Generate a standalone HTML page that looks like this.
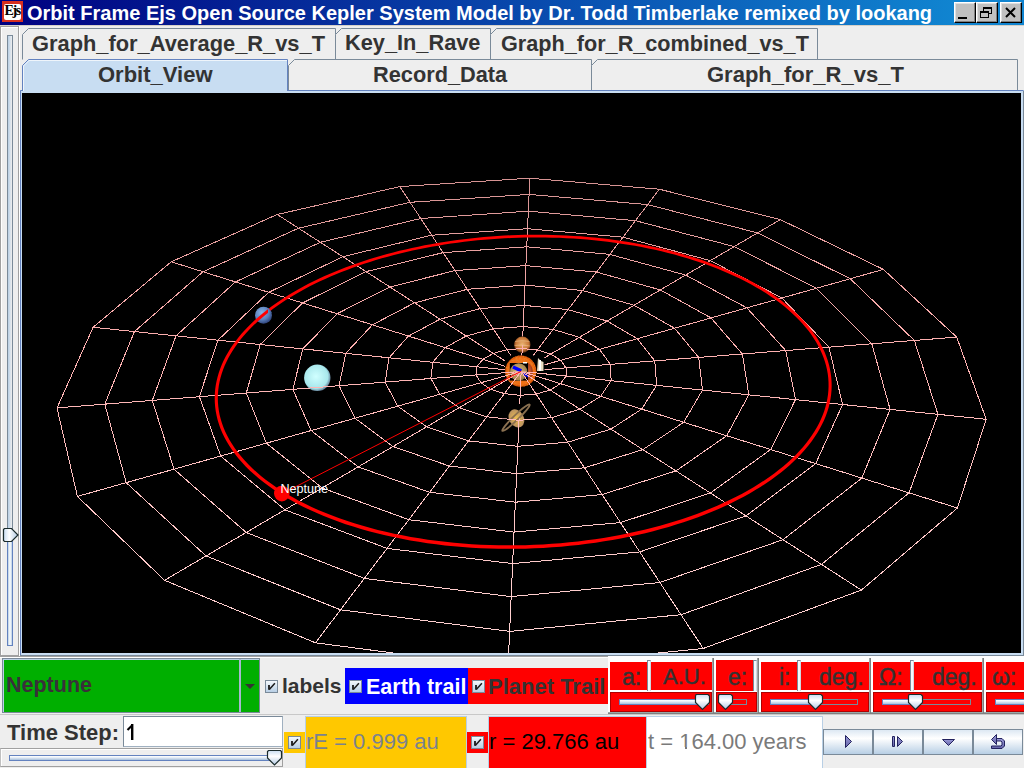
<!DOCTYPE html>
<html><head><meta charset="utf-8">
<style>
*{box-sizing:border-box;margin:0;padding:0}
html,body{width:1024px;height:768px;overflow:hidden;background:#eeeeee;font-family:"Liberation Sans",sans-serif;color:#333}
.a{position:absolute}
.t{position:absolute;white-space:pre;line-height:1}
.b{font-weight:bold}
/* title */
#title{left:0;top:0;width:1024px;height:25px;background:linear-gradient(to right,#000080 0%,#1084d0 93%)}
.wb{position:absolute;top:2px;width:22px;height:21px;background:#c0c0c0;border-top:1px solid #fff;border-left:1px solid #fff;border-right:1px solid #000;border-bottom:1px solid #000;box-shadow:inset -1px -1px 0 #808080, inset 1px 1px 0 #dfdfdf}
/* tabs */
.tab{position:absolute;background:#eeeeee;border-top:1px solid #7a8a99;border-right:1px solid #7a8a99;color:#333;font-weight:bold;font-size:21px;text-align:center}
.cb{position:absolute;width:13px;height:13px;border:1px solid #7a8a99;background:linear-gradient(to bottom,#f4f8fc,#b8cfe5)}
.cb::after{content:"";position:absolute;left:3px;top:2px;width:7px;height:7px;background:none}
.chk{position:absolute;left:1px;top:1px}
.btn{position:absolute;top:729px;height:26px;width:50px;border:1px solid #7a8a99;background:linear-gradient(to bottom,#dde8f3 0%,#ffffff 35%,#b8cfe5 100%)}
.rp{position:absolute;background:#ff0000}
.trk{position:absolute;height:6px;border:1px solid #6382bf;background:linear-gradient(to bottom,#ffffff 0%,#e8f0f8 35%,#a8c0dc 100%)}
.trk2{position:absolute;height:6px;border:1px solid #7a8a99}
</style></head><body>
<!-- title bar -->
<div id="title" class="a">
  <div class="a" style="left:2px;top:1px;width:21px;height:21px;background:#d83020"></div>
  <div class="a" style="left:4px;top:4px;width:17px;height:16px;background:#fff;border-radius:2px"></div>
  <div class="t" style="left:4.5px;top:3.5px;font-family:'Liberation Serif';font-weight:bold;font-size:14px;color:#000;letter-spacing:-1.4px">Ejs</div>
  <div class="t b" style="left:27px;top:3px;font-size:20px;color:#fff">Orbit Frame Ejs Open Source Kepler System Model by Dr. Todd Timberlake remixed by lookang</div>
  <div class="wb" style="left:954px"><div class="a" style="left:3px;top:14px;width:9px;height:2px;background:#000"></div></div>
  <div class="wb" style="left:976px">
    <div class="a" style="left:6px;top:4px;width:9px;height:7px;border:1px solid #000;border-top-width:2px"></div>
    <div class="a" style="left:3px;top:8px;width:9px;height:7px;border:1px solid #000;border-top-width:2px;background:#c0c0c0"></div>
  </div>
  <div class="wb" style="left:1000px">
    <svg class="a" style="left:3px;top:3px" width="14" height="14"><path d="M2,2 L11,11 M11,2 L2,11" stroke="#000" stroke-width="2"/></svg>
  </div>
</div>
<div class="a" style="left:0;top:25px;width:1024px;height:1px;background:#d4d0c8"></div>

<!-- left panel -->
<div class="a" style="left:0;top:26px;width:19px;height:630px;border:1px solid #a0a0a0;box-shadow:inset 1px 1px 0 #fff;background:#eeeeee"></div>
<div class="a" style="left:19px;top:26px;width:1px;height:630px;background:#fff"></div>
<div class="a" style="left:7px;top:35px;width:6px;height:494px;border:1px solid #7a8a99;border-bottom:none;background:linear-gradient(to right,#b8cfe5,#eeeeee)"></div>
<div class="a" style="left:7px;top:540px;width:6px;height:106px;border:1px solid #6382bf;background:linear-gradient(to right,#b8cfe5,#ffffff 50%,#b8cfe5)"></div>
<svg class="a" style="left:2px;top:527px" width="18" height="17"><defs><linearGradient id="tgv" x1="0" y1="0" x2="1" y2="0"><stop offset="0" stop-color="#c8dcf0"/><stop offset="0.4" stop-color="#ffffff"/><stop offset="1" stop-color="#b0c8e2"/></linearGradient></defs><path d="M1.5,2.5 L2.5,1.5 L9.5,1.5 L16,8 L9.5,14.5 L2.5,14.5 L1.5,13.5 Z" fill="url(#tgv)" stroke="#1a2a2a" stroke-width="1.2"/></svg>

<!-- tabs -->
<svg class="a" style="left:0;top:0" width="1024" height="100">
  <path d="M22.5,59.5 L22.5,34.5 L28.5,28.5 L335.5,28.5 L335.5,59.5" fill="#eeeeee" stroke="#7a8a99" stroke-width="1"/>
  <path d="M335.5,59.5 L335.5,34.5 L341.5,28.5 L490.5,28.5 L490.5,59.5" fill="#eeeeee" stroke="#7a8a99" stroke-width="1"/>
  <path d="M490.5,59.5 L490.5,34.5 L496.5,28.5 L817.5,28.5 L817.5,59.5" fill="#eeeeee" stroke="#7a8a99" stroke-width="1"/>
  <path d="M288.5,90.5 L288.5,65.5 L294.5,59.5 L591.5,59.5 L591.5,90.5" fill="#eeeeee" stroke="#7a8a99" stroke-width="1"/>
  <path d="M591.5,90.5 L591.5,65.5 L597.5,59.5 L1017.5,59.5 L1017.5,90.5" fill="#eeeeee" stroke="#7a8a99" stroke-width="1"/>
  <!-- content frame -->
  <rect x="20" y="90" width="1004" height="10" fill="#c8ddf2"/>
  <path d="M20.5,100 L20.5,90.5 L22.5,90.5 M287.5,90.5 L1023.5,90.5" fill="none" stroke="#6382bf" stroke-width="1"/>
  <path d="M22.5,91 L22.5,65.5 L28.5,59.5 L287.5,59.5 L287.5,91" fill="#c8ddf2" stroke="#6382bf" stroke-width="1"/>
  <path d="M23.5,91 L23.5,66 L29,60.5 L287,60.5" fill="none" stroke="#ffffff" stroke-width="1" opacity="0.7"/>
</svg>
<div class="a" style="left:20px;top:100px;width:1004px;height:556px;background:#c8ddf2"></div>
<div class="a" style="left:20px;top:100px;width:1px;height:556px;background:#6382bf"></div>
<div class="a" style="left:1023px;top:91px;width:1px;height:565px;background:#7a8a99"></div>
<div class="a" style="left:20px;top:655px;width:1004px;height:1px;background:#7a8a99"></div>
<div class="t b" style="left:32px;top:33px;font-size:21.85px">Graph_for_Average_R_vs_T</div>
<div class="t b" style="left:345px;top:32px;font-size:21.75px">Key_In_Rave</div>
<div class="t b" style="left:501px;top:33px;font-size:21.65px">Graph_for_R_combined_vs_T</div>
<div class="t b" style="left:98px;top:64px;font-size:22px">Orbit_View</div>
<div class="t b" style="left:373px;top:64px;font-size:21.75px">Record_Data</div>
<div class="t b" style="left:707px;top:64px;font-size:22px">Graph_for_R_vs_T</div>
<div class="a" style="left:22px;top:93px;width:999px;height:560px;background:#000;overflow:hidden">
<svg width="999" height="560" viewBox="22 93 999 560" style="display:block">
  <defs>
    
    <linearGradient id="gridG" gradientUnits="userSpaceOnUse" x1="0" y1="170" x2="0" y2="655"><stop offset="0.000" stop-color="#d39191"/><stop offset="0.125" stop-color="#e59d9d"/><stop offset="0.250" stop-color="#f4a7a7"/><stop offset="0.375" stop-color="#ffb1b1"/><stop offset="0.500" stop-color="#ffb9b9"/><stop offset="0.625" stop-color="#ffc1c1"/><stop offset="0.750" stop-color="#ffc8c8"/><stop offset="0.875" stop-color="#ffcece"/><stop offset="1.000" stop-color="#ffd4d4"/></linearGradient>
    <radialGradient id="gNep" cx="0.4" cy="0.35" r="0.7"><stop offset="0" stop-color="#8ab4e4"/><stop offset="0.6" stop-color="#5a80bc"/><stop offset="1" stop-color="#2a3a70"/></radialGradient>
    <radialGradient id="gUra" cx="0.45" cy="0.45" r="0.6"><stop offset="0" stop-color="#d0ffff"/><stop offset="0.75" stop-color="#a8e8ec"/><stop offset="1" stop-color="#506080"/></radialGradient>
    <radialGradient id="gJup" cx="0.5" cy="0.45" r="0.55"><stop offset="0" stop-color="#e8b070"/><stop offset="0.7" stop-color="#c87838"/><stop offset="1" stop-color="#5a2810"/></radialGradient>
    <radialGradient id="gSun" cx="0.5" cy="0.5" r="0.5"><stop offset="0" stop-color="#f87818"/><stop offset="0.85" stop-color="#f06a12"/><stop offset="1" stop-color="#d04a00"/></radialGradient>
    <radialGradient id="gVen" cx="0.45" cy="0.45" r="0.6"><stop offset="0" stop-color="#d8b878"/><stop offset="0.8" stop-color="#a88850"/><stop offset="1" stop-color="#6a5030"/></radialGradient>
    <radialGradient id="gMar" cx="0.3" cy="0.5" r="0.7"><stop offset="0" stop-color="#d06030"/><stop offset="1" stop-color="#903018"/></radialGradient>
    <radialGradient id="gSat" cx="0.5" cy="0.5" r="0.5"><stop offset="0" stop-color="#f0c050"/><stop offset="1" stop-color="#b89060"/></radialGradient>
    <clipPath id="front">
      <rect x="505" y="371.4" width="31.5" height="16"/>
      <rect x="514" y="345" width="16.5" height="8.5"/>
      <rect x="304" y="378" width="26.5" height="13.5"/>
      <rect x="255" y="315.5" width="17" height="8.5"/>
      <rect x="502" y="418.5" width="29" height="14.5"/>
      <rect x="530" y="371.4" width="14.5" height="1"/>
    </clipPath>
  </defs>
  <path d="M566.0,376.0 L566.0,367.9 L560.7,360.3 L550.8,354.1 L537.4,350.0 L522.2,348.5 L506.9,349.7 L493.3,353.4 L482.8,359.4 L476.8,366.8 L476.1,374.9 L480.9,382.8 L490.7,389.3 L504.4,393.6 L520.2,395.3 L536.1,394.0 L550.1,390.0 L560.5,383.7Z M611.1,380.7 L610.5,364.4 L599.4,349.4 L579.4,337.3 L553.0,329.4 L523.2,326.5 L493.2,328.8 L466.2,336.0 L445.2,347.6 L432.8,362.3 L430.8,378.5 L439.8,394.3 L459.2,407.7 L486.8,416.8 L519.0,420.3 L551.6,417.6 L580.0,409.2 L600.6,396.3Z M656.6,385.3 L654.8,360.9 L637.3,338.7 L607.2,321.1 L568.0,309.6 L524.2,305.4 L480.0,308.6 L440.0,319.2 L408.4,336.1 L389.1,357.8 L385.1,382.1 L397.8,406.2 L426.7,426.8 L468.5,440.9 L517.9,446.3 L567.7,442.2 L610.9,429.1 L641.7,409.1Z M702.5,390.1 L698.7,357.4 L674.5,328.2 L634.1,305.3 L582.5,290.5 L525.1,285.1 L467.3,289.3 L414.6,302.8 L372.4,324.8 L345.8,353.3 L339.1,385.7 L354.9,418.2 L393.0,446.5 L449.5,466.1 L516.7,473.6 L584.5,467.8 L642.9,449.6 L683.7,422.3Z M748.8,394.8 L742.4,354.0 L711.0,317.9 L660.3,289.9 L596.5,272.1 L525.9,265.6 L455.0,270.6 L389.9,287.0 L337.1,313.7 L302.8,348.9 L292.9,389.4 L311.2,430.6 L358.2,466.9 L429.6,492.3 L515.4,502.2 L602.1,494.6 L676.0,470.9 L726.7,435.7Z M795.5,399.6 L785.8,350.6 L746.8,307.8 L685.7,275.1 L609.9,254.4 L526.8,246.8 L443.2,252.6 L366.1,271.6 L302.6,302.9 L260.2,344.5 L246.3,393.0 L266.4,443.2 L322.2,488.0 L408.8,519.7 L514.0,532.1 L620.5,522.6 L710.4,493.0 L770.7,449.5Z M842.6,404.5 L828.9,347.2 L781.9,298.0 L710.3,260.6 L622.9,237.2 L527.6,228.7 L431.8,235.2 L342.9,256.7 L268.7,292.3 L217.9,340.2 L199.4,396.7 L220.7,456.1 L284.9,509.8 L387.1,548.4 L512.6,563.6 L639.8,551.9 L746.0,516.0 L815.7,463.6Z M890.1,409.4 L871.8,343.8 L816.4,288.3 L734.3,246.6 L635.5,220.7 L528.4,211.2 L420.8,218.5 L320.3,242.3 L235.5,281.9 L176.0,335.9 L152.3,400.4 L174.0,469.2 L246.2,532.5 L364.3,578.4 L511.2,596.6 L659.9,582.5 L783.0,539.7 L861.8,478.1Z M937.9,414.3 L914.4,340.5 L850.2,278.7 L757.6,232.9 L647.6,204.6 L529.1,194.4 L410.1,202.3 L298.5,228.2 L203.0,271.8 L134.4,331.6 L104.8,404.2 L126.2,482.7 L206.1,556.0 L340.5,609.8 L509.6,631.4 L681.0,614.7 L821.5,564.4 L909.0,492.9Z M986.2,419.3 L956.7,337.1 L883.4,269.4 L780.3,219.6 L659.3,189.2 L529.8,178.2 L399.8,186.6 L277.2,214.5 L171.2,261.8 L93.1,327.3 L57.0,407.9 L77.4,496.4 L164.5,580.3 L315.5,642.8 L508.0,668.0 L703.2,648.5 L861.4,590.1 L957.4,508.0Z M521.2,371.4 L986.2,419.3 M521.2,371.4 L956.7,337.1 M521.2,371.4 L883.4,269.4 M521.2,371.4 L780.3,219.6 M521.2,371.4 L659.3,189.2 M521.2,371.4 L529.8,178.2 M521.2,371.4 L399.8,186.6 M521.2,371.4 L277.2,214.5 M521.2,371.4 L171.2,261.8 M521.2,371.4 L93.1,327.3 M521.2,371.4 L57.0,407.9 M521.2,371.4 L77.4,496.4 M521.2,371.4 L164.5,580.3 M521.2,371.4 L315.5,642.8 M521.2,371.4 L508.0,668.0 M521.2,371.4 L703.2,648.5 M521.2,371.4 L861.4,590.1 M521.2,371.4 L957.4,508.0" fill="none" stroke="url(#gridG)" stroke-width="1" shape-rendering="crispEdges"/>
  <g fill="#000">
    <rect x="505" y="355.5" width="31.5" height="16"/>
    <rect x="514" y="336.5" width="16.5" height="8.5"/>
    <rect x="304" y="364.5" width="26.5" height="13.5"/>
    <rect x="255" y="306.5" width="17" height="9"/>
    <rect x="502" y="404" width="29" height="14.5"/>
    <rect x="530" y="357.5" width="14.5" height="14"/>
  </g>
  <circle cx="263.5" cy="315.2" r="8.5" fill="url(#gNep)"/>
  <circle cx="317.3" cy="377.8" r="13.2" fill="url(#gUra)"/>
  <!-- jupiter -->
  <circle cx="522.3" cy="344.8" r="8.2" fill="url(#gJup)"/>
  <path d="M515,341.5 Q522,340 529.5,341.5 M514.5,345.5 Q522,344.5 530,346" stroke="#f8d8a0" stroke-width="1.2" fill="none" opacity="0.45"/>
  <!-- sun -->
  <circle cx="520.8" cy="371.2" r="15.6" fill="url(#gSun)"/>
  <filter id="mot" x="0" y="0" width="1" height="1"><feTurbulence type="fractalNoise" baseFrequency="0.55" numOctaves="2" seed="7" result="n"/><feColorMatrix in="n" type="matrix" values="0 0 0 0 0.78  0 0 0 0 0.22  0 0 0 0 0.02  2.6 0 0 0 -1.05" result="c"/><feComposite in="c" in2="SourceGraphic" operator="in"/></filter>
  <circle cx="520.8" cy="371.2" r="15.6" fill="#000" filter="url(#mot)"/>
  <rect x="509.8" y="363" width="18.2" height="17.6" fill="#000"/>
  <circle cx="518.7" cy="372" r="8.7" fill="url(#gVen)"/>
  <path d="M528,363 A8.5,10 0 0 1 528,381 Z" fill="url(#gMar)"/>
  <rect x="523" y="362" width="4" height="1.5" fill="#fff"/>
  <line x1="513" y1="367" x2="521.3" y2="370.8" stroke="#0000ff" stroke-width="3.5"/>
  <line x1="523.5" y1="373.5" x2="528.4" y2="376.3" stroke="#0000ff" stroke-width="2.5"/>
  <!-- spacecraft -->
  <path d="M538,358 L541,361 L543.5,362 L543.5,371 L537,371 Z" fill="#e8dcc0"/>
  <rect x="539" y="360" width="2" height="11" fill="#ffffff"/>
  <!-- saturn -->
  <ellipse cx="516.4" cy="418.4" rx="7.3" ry="9.5" transform="rotate(-30 516.4 418.4)" fill="url(#gSat)"/>
  <ellipse cx="516" cy="417.7" rx="19" ry="2.4" transform="rotate(-44 516 417.7)" fill="none" stroke="#8a7050" stroke-width="1.8"/>
  <!-- grid in front of planet billboards -->
  <path d="M566.0,376.0 L566.0,367.9 L560.7,360.3 L550.8,354.1 L537.4,350.0 L522.2,348.5 L506.9,349.7 L493.3,353.4 L482.8,359.4 L476.8,366.8 L476.1,374.9 L480.9,382.8 L490.7,389.3 L504.4,393.6 L520.2,395.3 L536.1,394.0 L550.1,390.0 L560.5,383.7Z M611.1,380.7 L610.5,364.4 L599.4,349.4 L579.4,337.3 L553.0,329.4 L523.2,326.5 L493.2,328.8 L466.2,336.0 L445.2,347.6 L432.8,362.3 L430.8,378.5 L439.8,394.3 L459.2,407.7 L486.8,416.8 L519.0,420.3 L551.6,417.6 L580.0,409.2 L600.6,396.3Z M656.6,385.3 L654.8,360.9 L637.3,338.7 L607.2,321.1 L568.0,309.6 L524.2,305.4 L480.0,308.6 L440.0,319.2 L408.4,336.1 L389.1,357.8 L385.1,382.1 L397.8,406.2 L426.7,426.8 L468.5,440.9 L517.9,446.3 L567.7,442.2 L610.9,429.1 L641.7,409.1Z M702.5,390.1 L698.7,357.4 L674.5,328.2 L634.1,305.3 L582.5,290.5 L525.1,285.1 L467.3,289.3 L414.6,302.8 L372.4,324.8 L345.8,353.3 L339.1,385.7 L354.9,418.2 L393.0,446.5 L449.5,466.1 L516.7,473.6 L584.5,467.8 L642.9,449.6 L683.7,422.3Z M748.8,394.8 L742.4,354.0 L711.0,317.9 L660.3,289.9 L596.5,272.1 L525.9,265.6 L455.0,270.6 L389.9,287.0 L337.1,313.7 L302.8,348.9 L292.9,389.4 L311.2,430.6 L358.2,466.9 L429.6,492.3 L515.4,502.2 L602.1,494.6 L676.0,470.9 L726.7,435.7Z M795.5,399.6 L785.8,350.6 L746.8,307.8 L685.7,275.1 L609.9,254.4 L526.8,246.8 L443.2,252.6 L366.1,271.6 L302.6,302.9 L260.2,344.5 L246.3,393.0 L266.4,443.2 L322.2,488.0 L408.8,519.7 L514.0,532.1 L620.5,522.6 L710.4,493.0 L770.7,449.5Z M842.6,404.5 L828.9,347.2 L781.9,298.0 L710.3,260.6 L622.9,237.2 L527.6,228.7 L431.8,235.2 L342.9,256.7 L268.7,292.3 L217.9,340.2 L199.4,396.7 L220.7,456.1 L284.9,509.8 L387.1,548.4 L512.6,563.6 L639.8,551.9 L746.0,516.0 L815.7,463.6Z M890.1,409.4 L871.8,343.8 L816.4,288.3 L734.3,246.6 L635.5,220.7 L528.4,211.2 L420.8,218.5 L320.3,242.3 L235.5,281.9 L176.0,335.9 L152.3,400.4 L174.0,469.2 L246.2,532.5 L364.3,578.4 L511.2,596.6 L659.9,582.5 L783.0,539.7 L861.8,478.1Z M937.9,414.3 L914.4,340.5 L850.2,278.7 L757.6,232.9 L647.6,204.6 L529.1,194.4 L410.1,202.3 L298.5,228.2 L203.0,271.8 L134.4,331.6 L104.8,404.2 L126.2,482.7 L206.1,556.0 L340.5,609.8 L509.6,631.4 L681.0,614.7 L821.5,564.4 L909.0,492.9Z M986.2,419.3 L956.7,337.1 L883.4,269.4 L780.3,219.6 L659.3,189.2 L529.8,178.2 L399.8,186.6 L277.2,214.5 L171.2,261.8 L93.1,327.3 L57.0,407.9 L77.4,496.4 L164.5,580.3 L315.5,642.8 L508.0,668.0 L703.2,648.5 L861.4,590.1 L957.4,508.0Z M521.2,371.4 L986.2,419.3 M521.2,371.4 L956.7,337.1 M521.2,371.4 L883.4,269.4 M521.2,371.4 L780.3,219.6 M521.2,371.4 L659.3,189.2 M521.2,371.4 L529.8,178.2 M521.2,371.4 L399.8,186.6 M521.2,371.4 L277.2,214.5 M521.2,371.4 L171.2,261.8 M521.2,371.4 L93.1,327.3 M521.2,371.4 L57.0,407.9 M521.2,371.4 L77.4,496.4 M521.2,371.4 L164.5,580.3 M521.2,371.4 L315.5,642.8 M521.2,371.4 L508.0,668.0 M521.2,371.4 L703.2,648.5 M521.2,371.4 L861.4,590.1 M521.2,371.4 L957.4,508.0" fill="none" stroke="url(#gridG)" stroke-width="1" shape-rendering="crispEdges" clip-path="url(#front)"/>
  <path d="M829.65,403.31 L830.49,399.07 L831.11,394.78 L831.50,390.49 L831.66,386.20 L831.59,381.93 L831.29,377.67 L830.76,373.42 L830.01,369.20 L829.04,364.99 L827.84,360.82 L826.42,356.68 L824.79,352.57 L822.94,348.50 L820.88,344.47 L818.62,340.49 L816.15,336.55 L813.48,332.66 L810.61,328.82 L807.56,325.04 L804.31,321.32 L800.87,317.65 L797.26,314.05 L793.47,310.51 L789.51,307.03 L785.38,303.63 L781.09,300.29 L776.64,297.02 L772.04,293.83 L767.29,290.72 L762.40,287.68 L757.37,284.71 L752.20,281.83 L746.91,279.03 L741.49,276.31 L735.96,273.67 L730.31,271.11 L724.55,268.64 L718.69,266.25 L712.74,263.96 L706.69,261.74 L700.55,259.62 L694.33,257.58 L688.03,255.63 L681.66,253.76 L675.22,251.99 L668.72,250.30 L662.15,248.70 L655.54,247.19 L648.87,245.77 L642.16,244.44 L635.41,243.19 L628.62,242.04 L621.80,240.97 L614.95,239.98 L608.07,239.09 L601.18,238.27 L594.26,237.55 L587.34,236.91 L580.40,236.35 L573.46,235.88 L566.51,235.49 L559.57,235.18 L552.62,234.96 L545.68,234.82 L538.76,234.75 L531.84,234.77 L524.94,234.86 L518.05,235.04 L511.18,235.29 L504.34,235.62 L497.51,236.02 L490.72,236.51 L483.95,237.06 L477.21,237.69 L470.51,238.40 L463.84,239.17 L457.20,240.02 L450.60,240.95 L444.05,241.94 L437.53,243.01 L431.06,244.14 L424.63,245.35 L418.25,246.63 L411.92,247.97 L405.64,249.39 L399.41,250.87 L393.24,252.43 L387.12,254.05 L381.05,255.74 L375.05,257.49 L369.11,259.32 L363.23,261.21 L357.42,263.18 L351.68,265.21 L346.00,267.30 L340.40,269.47 L334.88,271.70 L329.43,274.00 L324.06,276.36 L318.77,278.79 L313.57,281.29 L308.45,283.86 L303.43,286.50 L298.50,289.20 L293.67,291.96 L288.94,294.80 L284.32,297.70 L279.80,300.66 L275.40,303.69 L271.11,306.79 L266.94,309.95 L262.89,313.18 L258.98,316.47 L255.19,319.82 L251.55,323.23 L248.04,326.71 L244.68,330.25 L241.48,333.85 L238.42,337.50 L235.53,341.21 L232.81,344.98 L230.25,348.81 L227.87,352.69 L225.67,356.61 L223.66,360.59 L221.83,364.62 L220.20,368.69 L218.78,372.80 L217.56,376.95 L216.55,381.14 L215.75,385.37 L215.17,389.62 L214.82,393.90 L214.70,398.21 L214.81,402.53 L215.16,406.87 L215.74,411.22 L216.57,415.57 L217.64,419.93 L218.95,424.28 L220.52,428.63 L222.33,432.96 L224.40,437.28 L226.72,441.57 L229.29,445.84 L232.11,450.08 L235.19,454.28 L238.51,458.45 L242.09,462.57 L245.91,466.64 L249.98,470.65 L254.30,474.61 L258.85,478.51 L263.65,482.33 L268.68,486.09 L273.94,489.77 L279.43,493.37 L285.14,496.89 L291.07,500.32 L297.21,503.66 L303.56,506.90 L310.11,510.04 L316.86,513.07 L323.79,516.01 L330.90,518.83 L338.18,521.53 L345.63,524.13 L353.24,526.60 L361.00,528.95 L368.90,531.18 L376.93,533.28 L385.09,535.25 L393.36,537.10 L401.74,538.81 L410.21,540.39 L418.78,541.84 L427.43,543.16 L436.15,544.33 L444.93,545.38 L453.76,546.28 L462.64,547.05 L471.56,547.69 L480.50,548.19 L489.46,548.55 L498.44,548.78 L507.41,548.87 L516.38,548.84 L525.34,548.66 L534.27,548.36 L543.17,547.93 L552.04,547.37 L560.87,546.68 L569.64,545.86 L578.36,544.92 L587.01,543.86 L595.59,542.68 L604.09,541.37 L612.51,539.95 L620.84,538.42 L629.07,536.77 L637.21,535.01 L645.24,533.14 L653.15,531.16 L660.95,529.08 L668.63,526.89 L676.18,524.61 L683.60,522.22 L690.89,519.74 L698.03,517.16 L705.03,514.49 L711.88,511.73 L718.58,508.88 L725.11,505.95 L731.49,502.93 L737.70,499.83 L743.74,496.66 L749.61,493.40 L755.31,490.08 L760.82,486.68 L766.15,483.21 L771.29,479.67 L776.24,476.07 L781.00,472.41 L785.56,468.69 L789.92,464.91 L794.07,461.07 L798.03,457.19 L801.77,453.26 L805.30,449.28 L808.62,445.26 L811.73,441.20 L814.61,437.10 L817.28,432.97 L819.72,428.80 L821.94,424.61 L823.94,420.39 L825.70,416.16 L827.24,411.90 L828.56,407.63 L829.63,403.39Z M826.59,402.62 L825.52,406.78 L824.25,410.90 L822.75,415.00 L821.03,419.10 L819.09,423.18 L816.92,427.24 L814.54,431.28 L811.94,435.29 L809.12,439.28 L806.08,443.23 L802.83,447.16 L799.36,451.04 L795.69,454.89 L791.81,458.69 L787.72,462.44 L783.43,466.15 L778.93,469.80 L774.24,473.40 L769.36,476.94 L764.28,480.42 L759.02,483.83 L753.57,487.18 L747.94,490.46 L742.14,493.67 L736.16,496.81 L730.00,499.87 L723.69,502.85 L717.21,505.75 L710.57,508.56 L703.78,511.29 L696.83,513.93 L689.75,516.48 L682.52,518.94 L675.15,521.30 L667.65,523.56 L660.03,525.73 L652.28,527.79 L644.42,529.75 L636.44,531.60 L628.36,533.34 L620.18,534.98 L611.90,536.50 L603.53,537.91 L595.08,539.20 L586.55,540.37 L577.95,541.42 L569.29,542.35 L560.57,543.16 L551.79,543.85 L542.98,544.40 L534.12,544.83 L525.24,545.13 L516.34,545.30 L507.42,545.34 L498.50,545.25 L489.58,545.02 L480.67,544.66 L471.78,544.17 L462.92,543.54 L454.10,542.77 L445.32,541.87 L436.59,540.84 L427.93,539.67 L419.34,538.37 L410.83,536.94 L402.41,535.37 L394.09,533.68 L385.88,531.85 L377.78,529.89 L369.81,527.81 L361.97,525.61 L354.28,523.29 L346.74,520.84 L339.35,518.28 L332.13,515.60 L325.09,512.82 L318.23,509.93 L311.56,506.93 L305.08,503.83 L298.80,500.64 L292.73,497.35 L286.88,493.98 L281.24,490.52 L275.83,486.98 L270.65,483.37 L265.69,479.68 L260.98,475.93 L256.50,472.12 L252.27,468.24 L248.28,464.32 L244.53,460.35 L241.04,456.34 L237.79,452.29 L234.79,448.21 L232.04,444.10 L229.53,439.96 L227.28,435.81 L225.27,431.64 L223.50,427.46 L221.98,423.27 L220.70,419.08 L219.66,414.89 L218.86,410.71 L218.28,406.53 L217.94,402.36 L217.82,398.21 L217.93,394.07 L218.26,389.95 L218.80,385.86 L219.56,381.79 L220.52,377.74 L221.69,373.73 L223.06,369.75 L224.62,365.80 L226.38,361.90 L228.33,358.03 L230.46,354.20 L232.77,350.42 L235.25,346.68 L237.91,342.99 L240.73,339.36 L243.71,335.77 L246.85,332.24 L250.14,328.76 L253.58,325.34 L257.16,321.97 L260.88,318.66 L264.73,315.41 L268.71,312.23 L272.82,309.10 L277.05,306.04 L281.40,303.03 L285.86,300.09 L290.43,297.22 L295.10,294.41 L299.88,291.66 L304.76,288.98 L309.74,286.36 L314.80,283.81 L319.96,281.33 L325.20,278.91 L330.53,276.55 L335.94,274.27 L341.42,272.04 L346.98,269.89 L352.62,267.80 L358.32,265.78 L364.10,263.83 L369.94,261.94 L375.84,260.12 L381.81,258.37 L387.83,256.68 L393.92,255.07 L400.06,253.52 L406.25,252.04 L412.50,250.62 L418.80,249.28 L425.15,248.01 L431.54,246.80 L437.98,245.67 L444.47,244.61 L450.99,243.61 L457.56,242.69 L464.16,241.84 L470.80,241.07 L477.48,240.37 L484.18,239.74 L490.92,239.18 L497.69,238.70 L504.48,238.30 L511.29,237.97 L518.13,237.72 L524.99,237.54 L531.86,237.45 L538.75,237.43 L545.64,237.49 L552.55,237.64 L559.46,237.86 L566.38,238.17 L573.29,238.56 L580.20,239.03 L587.11,239.58 L594.00,240.22 L600.88,240.95 L607.74,241.76 L614.58,242.65 L621.40,243.63 L628.18,244.70 L634.94,245.85 L641.65,247.10 L648.33,248.43 L654.95,249.84 L661.53,251.35 L668.05,252.94 L674.51,254.62 L680.91,256.39 L687.24,258.24 L693.50,260.19 L699.67,262.22 L705.76,264.33 L711.76,266.54 L717.67,268.82 L723.48,271.20 L729.19,273.65 L734.78,276.19 L740.26,278.81 L745.62,281.51 L750.86,284.30 L755.96,287.15 L760.94,290.09 L765.77,293.10 L770.45,296.19 L774.99,299.34 L779.37,302.57 L783.59,305.86 L787.65,309.22 L791.53,312.64 L795.25,316.13 L798.79,319.67 L802.14,323.27 L805.31,326.92 L808.30,330.62 L811.08,334.37 L813.68,338.17 L816.07,342.01 L818.26,345.88 L820.25,349.80 L822.03,353.74 L823.60,357.72 L824.95,361.72 L826.10,365.75 L827.03,369.80 L827.74,373.87 L828.24,377.96 L828.51,382.06 L828.57,386.17 L828.40,390.29 L828.02,394.41 L827.41,398.53 L826.57,402.70Z" fill="#ff0000" fill-rule="evenodd"/>
  <clipPath id="nepc"><rect x="268" y="300" width="10" height="13"/></clipPath>
  <circle cx="263.5" cy="315.2" r="8.5" fill="url(#gNep)" clip-path="url(#nepc)"/>
  <line x1="281.8" y1="493.8" x2="521" y2="371.4" stroke="#ff0000" stroke-width="1"/>
  <circle cx="281.8" cy="493.6" r="7.8" fill="#ff0000"/>
  <text x="280.5" y="493" font-family="Liberation Sans" font-size="12.6" fill="#fff">Neptune</text>
</svg>
</div>

<!-- bottom panel: row 1 -->
<div class="a" style="left:0;top:656px;width:1024px;height:1px;background:#a0a0a0"></div>
<div class="a" style="left:0;top:657px;width:1024px;height:1px;background:#fff"></div>
<!-- combo -->
<div class="a" style="left:2px;top:658px;width:258px;height:55px;border:1px solid #7a8a99;background:#00af00;box-shadow:inset 1px 1px 0 #b8cfe5"></div>
<div class="a" style="left:239px;top:659px;width:2px;height:53px;background:#a8b8d0"></div>
<div class="t b" style="left:6px;top:675px;font-size:21.5px;color:#3a303a">Neptune</div>
<svg class="a" style="left:245px;top:684px" width="11" height="6"><path d="M0,0 L10,0 L5,5 Z" fill="#333"/></svg>
<!-- labels -->
<div class="cb" style="left:265px;top:680px"><svg class="a" style="left:-1px;top:-1px" width="13" height="13"><path d="M4,5 L4,9.8" stroke="#1a1a1a" stroke-width="1.8" fill="none"/><path d="M4.3,9.4 L9.9,3.2" stroke="#1a1a1a" stroke-width="1.5" fill="none"/></svg></div>
<div class="t b" style="left:282px;top:675px;font-size:21px;color:#333">labels</div>
<!-- earth trail -->
<div class="a" style="left:345px;top:668px;width:123px;height:36px;background:#0000ff"></div>
<div class="cb" style="left:349px;top:680px"><svg class="a" style="left:-1px;top:-1px" width="13" height="13"><path d="M4,5 L4,9.8" stroke="#1a1a1a" stroke-width="1.8" fill="none"/><path d="M4.3,9.4 L9.9,3.2" stroke="#1a1a1a" stroke-width="1.5" fill="none"/></svg></div>
<div class="t b" style="left:366px;top:676.5px;font-size:21.5px;color:#fff">Earth trail</div>
<!-- planet trail -->
<div class="a" style="left:468px;top:668px;width:140px;height:36px;background:#ff0000"></div>
<div class="cb" style="left:472px;top:680px"><svg class="a" style="left:-1px;top:-1px" width="13" height="13"><path d="M4,5 L4,9.8" stroke="#1a1a1a" stroke-width="1.8" fill="none"/><path d="M4.3,9.4 L9.9,3.2" stroke="#1a1a1a" stroke-width="1.5" fill="none"/></svg></div>
<div class="t b" style="left:488px;top:676px;font-size:22px;color:#333">Planet Trail</div>

<!-- parameter panels -->
<div class="a" style="left:608px;top:656px;width:416px;height:58px;background:#fff"></div>
<div class="a" style="left:608px;top:712px;width:416px;height:1px;background:#98a8a8"></div>
<div class="a" style="left:608px;top:713px;width:416px;height:1px;background:#808080"></div>
<div class="rp" style="left:610px;top:662px;width:37px;height:28px"></div>
<div class="a" style="left:647px;top:660px;width:4px;height:31px;border-left:1px solid #7a8a99;border-top:1px solid #7a8a99;border-right:1px solid #d0d8e0;background:#f4f8fc"></div>
<div class="rp" style="left:651px;top:662px;width:61px;height:28px"></div>
<div class="t" style="left:622px;top:666px;font-size:23px;color:#333;-webkit-text-stroke:0.45px #333">a:</div>
<div class="t" style="left:663px;top:666px;font-size:22px;color:#333;-webkit-text-stroke:0.45px #333">A.U.</div>
<div class="a" style="left:610px;top:692px;width:102px;height:20px;background:#ff0000;border:1px solid #b00000;"></div>
<div class="trk" style="left:619px;top:699px;width:79px"></div>
<div class="trk2" style="left:706px;top:699px;width:3px"></div>
<svg class="a" style="left:694px;top:693px" width="17" height="18"><defs><linearGradient id="tg694" x1="0" y1="0" x2="0" y2="1"><stop offset="0" stop-color="#c8dcf0"/><stop offset="0.4" stop-color="#ffffff"/><stop offset="1" stop-color="#b0c8e2"/></linearGradient></defs><path d="M2,1.5 L14,1.5 L15.5,3 L15.5,9.5 L8.5,16.5 L1.5,9.5 L1.5,3 Z" fill="url(#tg694)" stroke="#1a2a2a" stroke-width="1.2"/></svg>
<div class="a" style="left:712px;top:658px;width:1px;height:55px;background:#a0a8a8"></div>
<div class="a" style="left:713px;top:658px;width:1px;height:55px;background:#808080"></div>
<div class="rp" style="left:716px;top:660px;width:37px;height:31px"></div>
<div class="a" style="left:753px;top:660px;width:4px;height:31px;border-left:1px solid #7a8a99;border-top:1px solid #7a8a99;border-right:1px solid #d0d8e0;background:#f4f8fc"></div>
<div class="t" style="left:728px;top:666px;font-size:23px;color:#333;-webkit-text-stroke:0.45px #333">e:</div>
<div class="a" style="left:716px;top:692px;width:41px;height:20px;background:#ff0000;border:1px solid #b00000;"></div>
<div class="trk2" style="left:729px;top:699px;width:18px"></div>
<svg class="a" style="left:717px;top:693px" width="17" height="18"><defs><linearGradient id="tg717" x1="0" y1="0" x2="0" y2="1"><stop offset="0" stop-color="#c8dcf0"/><stop offset="0.4" stop-color="#ffffff"/><stop offset="1" stop-color="#b0c8e2"/></linearGradient></defs><path d="M2,1.5 L14,1.5 L15.5,3 L15.5,9.5 L8.5,16.5 L1.5,9.5 L1.5,3 Z" fill="url(#tg717)" stroke="#1a2a2a" stroke-width="1.2"/></svg>
<div class="a" style="left:757px;top:658px;width:1px;height:55px;background:#a0a8a8"></div>
<div class="a" style="left:758px;top:658px;width:1px;height:55px;background:#808080"></div>
<div class="rp" style="left:761px;top:662px;width:36px;height:28px"></div>
<div class="a" style="left:797px;top:660px;width:4px;height:31px;border-left:1px solid #7a8a99;border-top:1px solid #7a8a99;border-right:1px solid #d0d8e0;background:#f4f8fc"></div>
<div class="rp" style="left:801px;top:662px;width:68px;height:28px"></div>
<div class="t" style="left:779px;top:666px;font-size:23px;color:#333;-webkit-text-stroke:0.45px #333">i:</div>
<div class="t" style="left:819px;top:666px;font-size:23px;color:#333;-webkit-text-stroke:0.45px #333">deg.</div>
<div class="a" style="left:761px;top:692px;width:108px;height:20px;background:#ff0000;border:1px solid #b00000;"></div>
<div class="trk" style="left:770px;top:699px;width:41px"></div>
<div class="trk2" style="left:819px;top:699px;width:39px"></div>
<svg class="a" style="left:807px;top:693px" width="17" height="18"><defs><linearGradient id="tg807" x1="0" y1="0" x2="0" y2="1"><stop offset="0" stop-color="#c8dcf0"/><stop offset="0.4" stop-color="#ffffff"/><stop offset="1" stop-color="#b0c8e2"/></linearGradient></defs><path d="M2,1.5 L14,1.5 L15.5,3 L15.5,9.5 L8.5,16.5 L1.5,9.5 L1.5,3 Z" fill="url(#tg807)" stroke="#1a2a2a" stroke-width="1.2"/></svg>
<div class="a" style="left:869px;top:658px;width:1px;height:55px;background:#a0a8a8"></div>
<div class="a" style="left:870px;top:658px;width:1px;height:55px;background:#808080"></div>
<div class="rp" style="left:873px;top:662px;width:37px;height:28px"></div>
<div class="a" style="left:910px;top:660px;width:4px;height:31px;border-left:1px solid #7a8a99;border-top:1px solid #7a8a99;border-right:1px solid #d0d8e0;background:#f4f8fc"></div>
<div class="rp" style="left:914px;top:662px;width:68px;height:28px"></div>
<div class="t" style="left:879px;top:666px;font-size:23px;color:#333;-webkit-text-stroke:0.45px #333">&#937;:</div>
<div class="t" style="left:932px;top:666px;font-size:23px;color:#333;-webkit-text-stroke:0.45px #333">deg.</div>
<div class="a" style="left:873px;top:692px;width:109px;height:20px;background:#ff0000;border:1px solid #b00000;"></div>
<div class="trk" style="left:882px;top:699px;width:29px"></div>
<div class="trk2" style="left:919px;top:699px;width:52px"></div>
<svg class="a" style="left:907px;top:693px" width="17" height="18"><defs><linearGradient id="tg907" x1="0" y1="0" x2="0" y2="1"><stop offset="0" stop-color="#c8dcf0"/><stop offset="0.4" stop-color="#ffffff"/><stop offset="1" stop-color="#b0c8e2"/></linearGradient></defs><path d="M2,1.5 L14,1.5 L15.5,3 L15.5,9.5 L8.5,16.5 L1.5,9.5 L1.5,3 Z" fill="url(#tg907)" stroke="#1a2a2a" stroke-width="1.2"/></svg>
<div class="a" style="left:982px;top:658px;width:1px;height:55px;background:#a0a8a8"></div>
<div class="a" style="left:983px;top:658px;width:1px;height:55px;background:#808080"></div>
<div class="rp" style="left:986px;top:662px;width:38px;height:28px"></div>
<div class="t" style="left:992px;top:666px;font-size:23px;color:#333;-webkit-text-stroke:0.45px #333">&#969;:</div>
<div class="a" style="left:986px;top:692px;width:40px;height:20px;background:#ff0000;border:1px solid #b00000;border-right:none"></div>
<div class="trk" style="left:995px;top:699px;width:40px"></div>

<!-- row 2 -->
<div class="a" style="left:0;top:714px;width:1024px;height:1px;background:#c8c8c8"></div>
<div class="t b" style="left:7px;top:722px;font-size:22px;color:#333">Time Step:</div>
<div class="a" style="left:123px;top:716px;width:160px;height:31px;border:1px solid #7a8a99;border-right-color:#a0b0c0;border-bottom-color:#a0b0c0;background:#fff"></div>
<svg class="a" style="left:124px;top:720px" width="14" height="24"><rect x="7" y="4" width="2.4" height="16" fill="#000"/><path d="M3.5,10 L8,5.5" stroke="#000" stroke-width="2.2"/></svg>
<div class="a" style="left:0;top:748px;width:283px;height:19px;border:1px solid #a0a0a0;border-left-color:#c0c0c0;box-shadow:inset 1px 1px 0 #fff"></div>
<div class="trk" style="left:9px;top:755px;width:262px"></div>
<svg class="a" style="left:266px;top:749px" width="18" height="18"><defs><linearGradient id="tgts" x1="0" y1="0" x2="0" y2="1"><stop offset="0" stop-color="#c8dcf0"/><stop offset="0.4" stop-color="#ffffff"/><stop offset="1" stop-color="#b0c8e2"/></linearGradient></defs><path d="M2.5,1.5 L14.5,1.5 L15.5,2.5 L15.5,9 L8.5,16 L1.5,9 L1.5,2.5 Z" fill="url(#tgts)" stroke="#1a2a2a" stroke-width="1.2"/></svg>

<!-- rE -->
<div class="a" style="left:284px;top:732px;width:21px;height:21px;background:#ffc800"></div>
<div class="cb" style="left:288px;top:736px"><svg class="a" style="left:-1px;top:-1px" width="13" height="13"><path d="M4,5 L4,9.8" stroke="#1a1a1a" stroke-width="1.8" fill="none"/><path d="M4.3,9.4 L9.9,3.2" stroke="#1a1a1a" stroke-width="1.5" fill="none"/></svg></div>
<div class="a" style="left:305px;top:716px;width:162px;height:52px;background:#ffc800;border:1px solid #b8cfe5;border-bottom:none"></div>
<div class="t" style="left:306px;top:731px;font-size:22px;color:#7a8290">rE = 0.999 au</div>
<!-- r -->
<div class="a" style="left:467px;top:732px;width:21px;height:21px;background:#ff0000"></div>
<div class="cb" style="left:471px;top:736px"><svg class="a" style="left:-1px;top:-1px" width="13" height="13"><path d="M4,5 L4,9.8" stroke="#1a1a1a" stroke-width="1.8" fill="none"/><path d="M4.3,9.4 L9.9,3.2" stroke="#1a1a1a" stroke-width="1.5" fill="none"/></svg></div>
<div class="a" style="left:488px;top:716px;width:159px;height:52px;background:#ff0000;border:1px solid #b8cfe5;border-bottom:none"></div>
<div class="t" style="left:489px;top:731px;font-size:22px;color:#000">r = 29.766 au</div>
<!-- t -->
<div class="a" style="left:646px;top:716px;width:177px;height:52px;background:#fff;border:1px solid #b8cfe5;border-bottom:none"></div>
<div class="t" style="left:648px;top:731px;font-size:22px;color:#7a7a7a">t = 164.00 years</div>
<div class="a" style="left:680px;top:747px;width:5px;height:2px;background:#fff"></div><div class="a" style="left:687px;top:747px;width:4px;height:2px;background:#fff"></div>
<!-- buttons -->
<div class="btn" style="left:823px"></div>
<div class="btn" style="left:873px"></div>
<div class="btn" style="left:923px"></div>
<div class="btn" style="left:973px;width:50px"></div>
<svg class="a" style="left:823px;top:729px" width="200" height="26" viewBox="823 729 200 26">
  <defs><linearGradient id="ig" x1="0" y1="0" x2="0" y2="1"><stop offset="0" stop-color="#9a9ad8"/><stop offset="1" stop-color="#6464a8"/></linearGradient></defs>
  <g fill="url(#ig)" stroke="#22225e" stroke-width="1" stroke-linejoin="miter">
    <path d="M845.5,735.5 L851.5,741.5 L845.5,747.5 Z"/>
    <path d="M892.5,736.5 L894.5,736.5 L894.5,746.5 L892.5,746.5 Z"/>
    <path d="M897.5,736.5 L902.5,741.5 L897.5,746.5 Z"/>
    <path d="M942.5,739.5 L954.5,739.5 L948.5,745.5 Z"/>
    <path d="M991.5,739.5 L996.5,734.5 L996.5,744.5 Z"/>
    <path d="M996.5,738.5 L1002,738.5 L1004.5,741 L1004.5,746 L1002,748.5 L991.5,748.5 L991.5,746 L1001,746 L1002,745 L1002,742 L1001,741 L996.5,741 Z"/>
  </g>
</svg>
</body></html>
